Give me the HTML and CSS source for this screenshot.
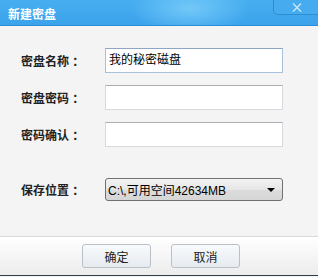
FILE: index.html
```html
<!DOCTYPE html>
<html lang="zh-CN">
<head>
    <meta charset="UTF-8">
    <title>新建密盘</title>
    <link rel="stylesheet" href="styles.css">
</head>
<body>
    <div class="dialog">
        <div class="title-bar">
            <span class="title">新建密盘</span>
            <button class="close">
                <svg width="10" height="9" viewBox="0 0 10 9"><path d="M1 0.5 L9 8.5 M9 0.5 L1 8.5" stroke="#cfe9fb" stroke-width="1.3" fill="none"/></svg>
            </button>
        </div>
        <div class="content">
            <div class="row">
                <span class="label">密盘名称 ：</span>
                <div class="field focused">我的秘密磁盘</div>
            </div>
            <div class="row">
                <span class="label">密盘密码 ：</span>
                <div class="field"></div>
            </div>
            <div class="row">
                <span class="label">密码确认 ：</span>
                <div class="field"></div>
            </div>
            <div class="row location">
                <span class="label">保存位置 ：</span>
                <div class="select">
                    <span>C:\,可用空间42634MB</span>
                    <span class="arrow"></span>
                </div>
            </div>
        </div>
        <div class="footer">
            <button class="btn">确定</button>
            <button class="btn">取消</button>
        </div>
    </div>
</body>
</html>
```

FILE: styles.css
```css
body {
    margin: 0;
    font-family: "Liberation Sans", "Noto Sans CJK SC", sans-serif;
    font-size: 12px;
    color: #1a1a1a;
}
.dialog {
    width: 318px;
    height: 277px;
    display: flex;
    flex-direction: column;
    background-color: #f4f4f4;
    overflow: hidden;
}
.title-bar {
    height: 25px;
    flex-shrink: 0;
    display: flex;
    align-items: center;
    justify-content: space-between;
    background: radial-gradient(ellipse 60px 26px at 190px 8px, #72c8f8 0%, rgba(114, 200, 248, 0) 100%),
                linear-gradient(to bottom, #47aef0, #3ba3ec);
    border-bottom: 1px solid #2a8ed6;
}
.title {
    padding-left: 8px;
    color: #ffffff;
    font-weight: bold;
    font-size: 12px;
    margin-top: 2px;
}
.close {
    align-self: flex-start;
    width: 47px;
    height: 15px;
    margin-right: -2px;
    padding: 0;
    border: 1px solid #2e8ed3;
    border-top: none;
    border-radius: 0 0 0 5px;
    background-color: #46acef;
    display: flex;
    align-items: center;
    justify-content: center;
}
.content {
    flex: 1;
    padding: 22px 0 0 21px;
    display: flex;
    flex-direction: column;
    gap: 12px;
}
.row {
    display: flex;
    align-items: center;
}
.row.location {
    margin-top: 19px;
}
.label {
    width: 84px;
    font-weight: bold;
    color: #222222;
    white-space: nowrap;
}
.field {
    width: 173px;
    height: 23px;
    line-height: 23px;
    padding-left: 3px;
    background-color: #ffffff;
    border: 1px solid #d6d9dd;
    border-top-color: #abadb3;
    color: #000000;
}
.field.focused {
    border-color: #a9c0da;
    border-top-color: #8ea6c4;
}
.select {
    width: 167px;
    height: 21px;
    padding: 0 7px 0 2px;
    display: flex;
    align-items: center;
    justify-content: space-between;
    border: 1px solid #707070;
    border-radius: 3px;
    background: linear-gradient(to bottom, #f3f3f3, #e6e6e6 50%, #dcdcdc 51%, #d6d6d6);
    color: #000000;
}
.arrow {
    width: 0;
    height: 0;
    border-left: 4px solid transparent;
    border-right: 4px solid transparent;
    border-top: 4px solid #000000;
}
.footer {
    height: 38px;
    flex-shrink: 0;
    display: flex;
    align-items: center;
    justify-content: center;
    gap: 20px;
    padding-left: 4px;
    border-top: 1px solid #dadada;
    border-bottom: 1px solid #2d3b4b;
    background: linear-gradient(to bottom, #ffffff, #ececec);
    margin-bottom: 1px;
}
.btn {
    width: 69px;
    height: 24px;
    padding: 0;
    font-family: "Liberation Sans", "Noto Sans CJK SC", sans-serif;
    font-size: 12px;
    color: #222222;
    border: 1px solid #b9c0c8;
    border-radius: 3px;
    background: linear-gradient(to bottom, #f8fafc, #e6ebf0);
}
```
